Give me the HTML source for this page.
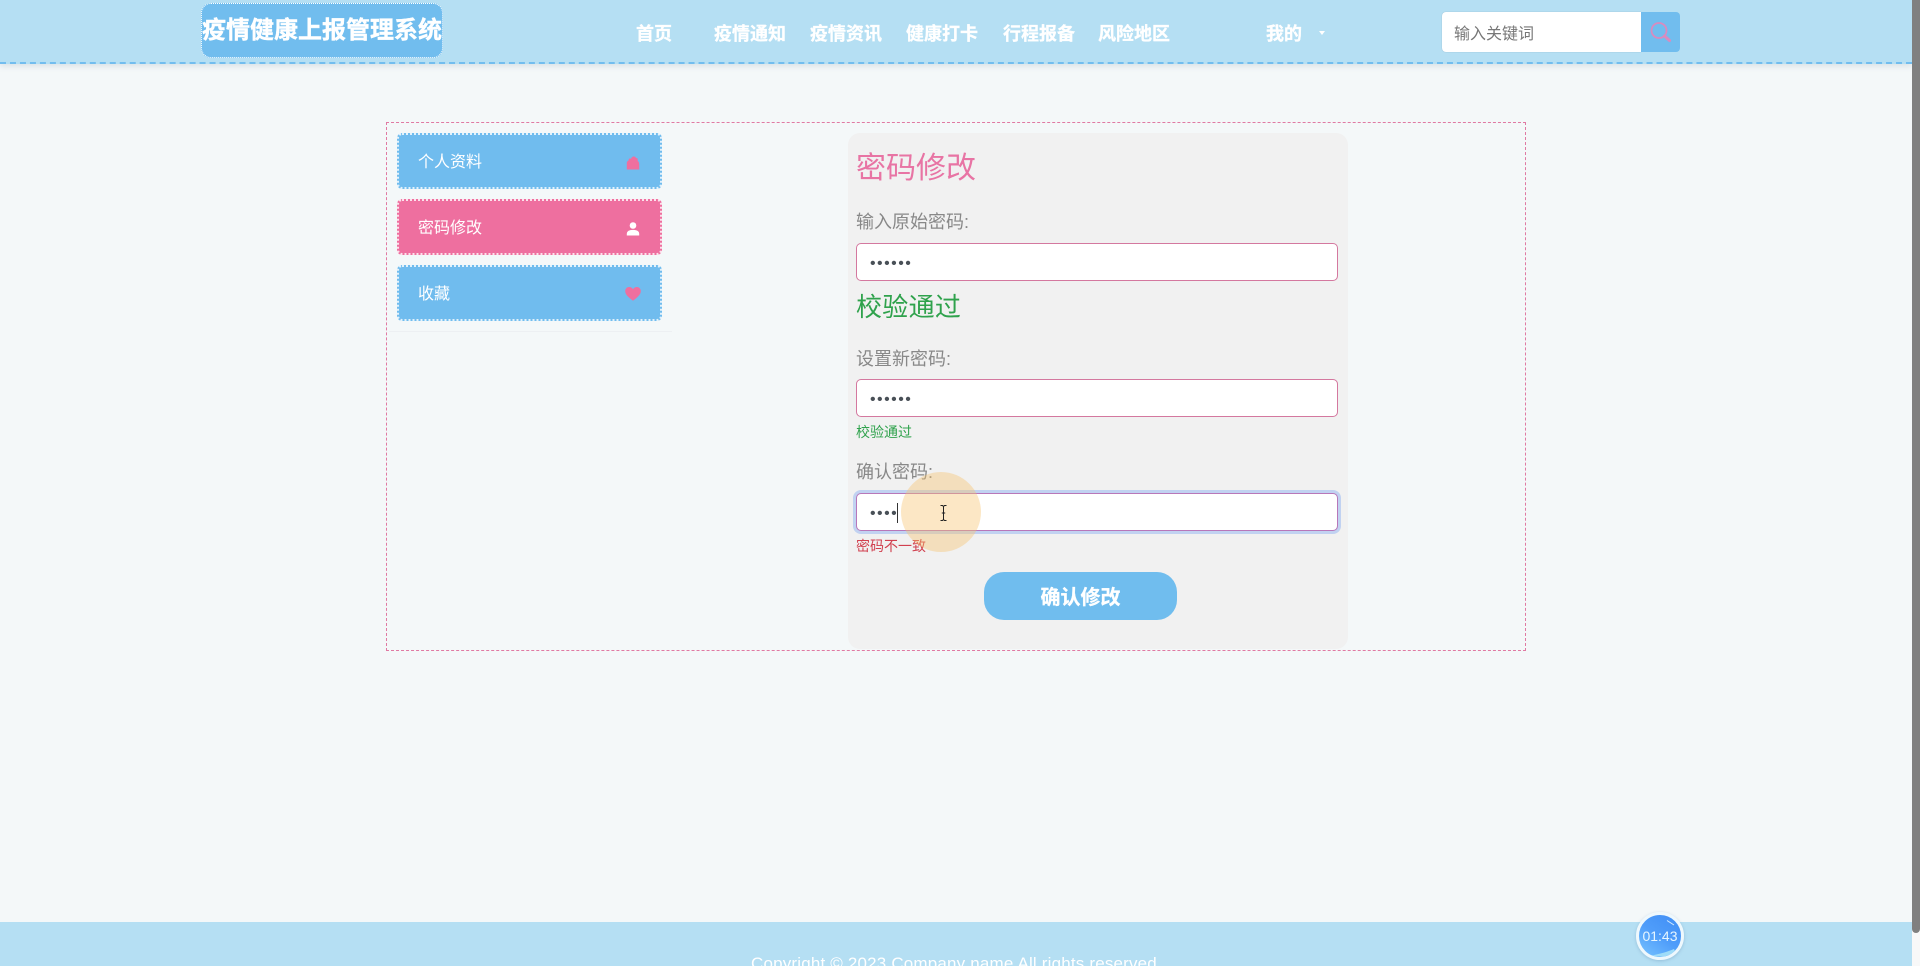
<!DOCTYPE html>
<html lang="zh-CN">
<head>
<meta charset="utf-8">
<title>密码修改</title>
<style>
html,body{margin:0;padding:0;width:1920px;height:966px;overflow:hidden;background:#f4f8f9;}
body{position:relative;font-family:"Liberation Sans","Noto Sans CJK SC",sans-serif;}
.a{position:absolute;white-space:nowrap;}
#hd{left:0;top:0;width:1912px;height:62px;background:#b5dff3;border-bottom:2px dashed #72bdee;box-shadow:0 2px 6px rgba(120,140,160,.22);}
#logo{left:201px;top:3px;width:240px;height:53px;background:#71bdee;border:1px dotted #fff;border-radius:10px;color:#fff;font-weight:700;font-size:24px;line-height:53px;text-align:center;-webkit-text-stroke:.4px #fff;}
.nav{top:21px;height:26px;line-height:26px;font-size:18px;font-weight:700;color:#fff;-webkit-text-stroke:.3px #fff;}
#caret{left:1319px;top:31px;width:0;height:0;border-left:3.5px solid transparent;border-right:3.5px solid transparent;border-top:4px solid #fff;}
#si{left:1442px;top:12px;width:199px;height:40px;background:#fff;border-radius:4px 0 0 4px;box-shadow:0 0 1px rgba(120,140,160,.6);color:#777;font-size:16px;line-height:46px;text-indent:12px;}
#sb{left:1641px;top:12px;width:39px;height:40px;background:#71bdee;border-radius:0 4px 4px 0;}
#box{left:386px;top:122px;width:1138px;height:527px;border:1px dashed #e07aa3;}
.it{left:397px;width:261px;height:52px;border:2px dotted rgba(255,255,255,.8);border-radius:5px;background:#70bcee;color:#fff;font-size:16px;line-height:56px;text-indent:19px;}
.it.on{background:#ee6f9f;}
#sep{left:389px;top:331px;width:283px;height:1px;background:#edf0f3;}
#panel{left:848px;top:133px;width:500px;height:516px;background:#f1f1f1;border-radius:12px;}
.lb{left:856px;color:#888;font-size:18px;line-height:26px;}
.ip{left:856px;width:480px;height:33px;padding:3px 0 0;border:1px solid #d4789f;border-radius:5px;background:#fff;margin:0;color:#495057;font-size:16px;line-height:33px;text-indent:13px;letter-spacing:1.45px;font-family:"Liberation Sans",sans-serif;outline:none;}
#btn{left:984px;top:572px;width:193px;height:48px;background:#70bdee;border-radius:20px;color:#fff;font-weight:700;font-size:20px;line-height:52px;text-align:center;-webkit-text-stroke:.3px #fff;}
#ft{left:0;top:922px;width:1912px;height:44px;background:#b5dff3;overflow:hidden;}
#cp{left:751px;top:30px;color:#fff;font-size:17px;line-height:24px;letter-spacing:.18px;}
#tm{left:1636px;top:912px;width:42px;height:42px;border:3px solid #eef8fd;border-radius:50%;background:linear-gradient(215deg,#3f8df5 0%,#4f9dfa 50%,#78c4ff 100%);box-shadow:0 1px 3px rgba(90,130,170,.35);color:#e6f6ff;font-size:14px;line-height:42px;text-align:center;overflow:hidden;}
#sbt{left:1912px;top:0;width:8px;height:966px;background:#f8f8f8;}
#thumb{left:1912px;top:0;width:8px;height:933px;background:#808080;border-radius:0 0 4px 4px;}
#cur{left:901px;top:472px;width:80px;height:80px;border-radius:50%;background:rgba(248,196,110,.4);}
</style>
</head>
<body>
<div class="a" id="hd"></div>
<div class="a" id="logo">疫情健康上报管理系统</div>
<div class="a nav" style="left:636px">首页</div>
<div class="a nav" style="left:714px">疫情通知</div>
<div class="a nav" style="left:810px">疫情资讯</div>
<div class="a nav" style="left:906px">健康打卡</div>
<div class="a nav" style="left:1003px">行程报备</div>
<div class="a nav" style="left:1098px">风险地区</div>
<div class="a nav" style="left:1266px">我的</div>
<div class="a" id="caret"></div>
<div class="a" id="si">输入关键词</div>
<div class="a" id="sb"><svg width="39" height="40" viewBox="0 0 39 40"><circle cx="18" cy="18.5" r="7.5" fill="none" stroke="#d98bbf" stroke-width="1.8"/><path d="M23.5 24l5 4.5" stroke="#d98bbf" stroke-width="3" stroke-linecap="round"/></svg></div>

<div class="a" id="box"></div>
<div class="a it" style="top:133px">个人资料</div>
<div class="a it on" style="top:199px">密码修改</div>
<div class="a it" style="top:265px">收藏</div>
<svg class="a" style="left:625px;top:155px" width="16" height="16" viewBox="0 0 16 16"><path d="M1.800 14.500V8Q1.800 6.500 3.500 5.500L4 3.500 6 3.800Q7 1.200 9 1.500 10.500 1.500 11 3L12.500 3.200 12.800 6Q14.200 7 14.200 8.500V14.500z" fill="#ef6f9f"/></svg>
<svg class="a" style="left:625px;top:221px" width="16" height="16" viewBox="0 0 16 16"><circle cx="8" cy="4.500" r="3.300" fill="#fff"/><path d="M1.800 14.500v-1.600c0-2.600 2.200-4 6.200-4s6.200 1.400 6.200 4v1.600z" fill="#fff"/></svg>
<svg class="a" style="left:625px;top:286px" width="16" height="15" viewBox="0 0 16 15"><path d="M8 14.800C3 10.900.2 8.400.2 5 .2 2.700 2 1 4.200 1c1.600 0 3 .8 3.800 2.200C8.800 1.800 10.200 1 11.800 1c2.200 0 4 1.700 4 4 0 3.400-2.800 5.900-7.800 9.800z" fill="#ef6f9f"/></svg>
<div class="a" id="sep"></div>

<div class="a" id="panel"></div>
<div class="a" style="left:856px;top:147px;color:#e874a4;font-size:30px;line-height:44px">密码修改</div>
<div class="a lb" style="top:209px">输入原始密码:</div>
<input class="a ip" style="top:243px" type="password" value="123456">
<div class="a" style="left:856px;top:288px;color:#2fa24c;font-size:26px;line-height:38px;letter-spacing:.3px">校验通过</div>
<div class="a lb" style="top:346px">设置新密码:</div>
<input class="a ip" style="top:379px" type="password" value="123456">
<div class="a" style="left:856px;top:422px;color:#2fa24c;font-size:14px;line-height:20px">校验通过</div>
<div class="a lb" style="top:459px">确认密码:</div>
<input class="a ip" style="top:493px;box-shadow:0 0 0 3px rgba(70,130,240,.28);border-color:#b877b9" type="password" value="1234">
<div class="a" style="left:897px;top:503px;width:1px;height:20px;background:#333"></div>
<div class="a" style="left:856px;top:536px;color:#d1404f;font-size:14px;line-height:20px">密码不一致</div>
<div class="a" id="btn">确认修改</div>
<div class="a" id="cur"></div>
<svg class="a" style="left:939px;top:505px" width="9" height="16" viewBox="0 0 9 16"><path d="M1.500 .5h2l1 1 1-1h2M4.500 1.500v13M1.500 15.500h2l1-1 1 1h2M2.800 8h3.400" fill="none" stroke="#222" stroke-width="1"/></svg>

<div class="a" id="ft"><div class="a" id="cp">Copyright © 2023 Company name All rights reserved.</div></div>
<div class="a" id="tm">01:43<svg class="a" style="left:0;top:0" width="42" height="42" viewBox="0 0 42 42"><path d="M28 5.500l7 4.500" stroke="#d5ecff" stroke-width="1" fill="none"/><path d="M8 41c10-1 20-4 27-7l4 8z" fill="#9fdcf8"/></svg></div>
<div class="a" id="sbt"></div>
<div class="a" id="thumb"></div>
</body>
</html>
